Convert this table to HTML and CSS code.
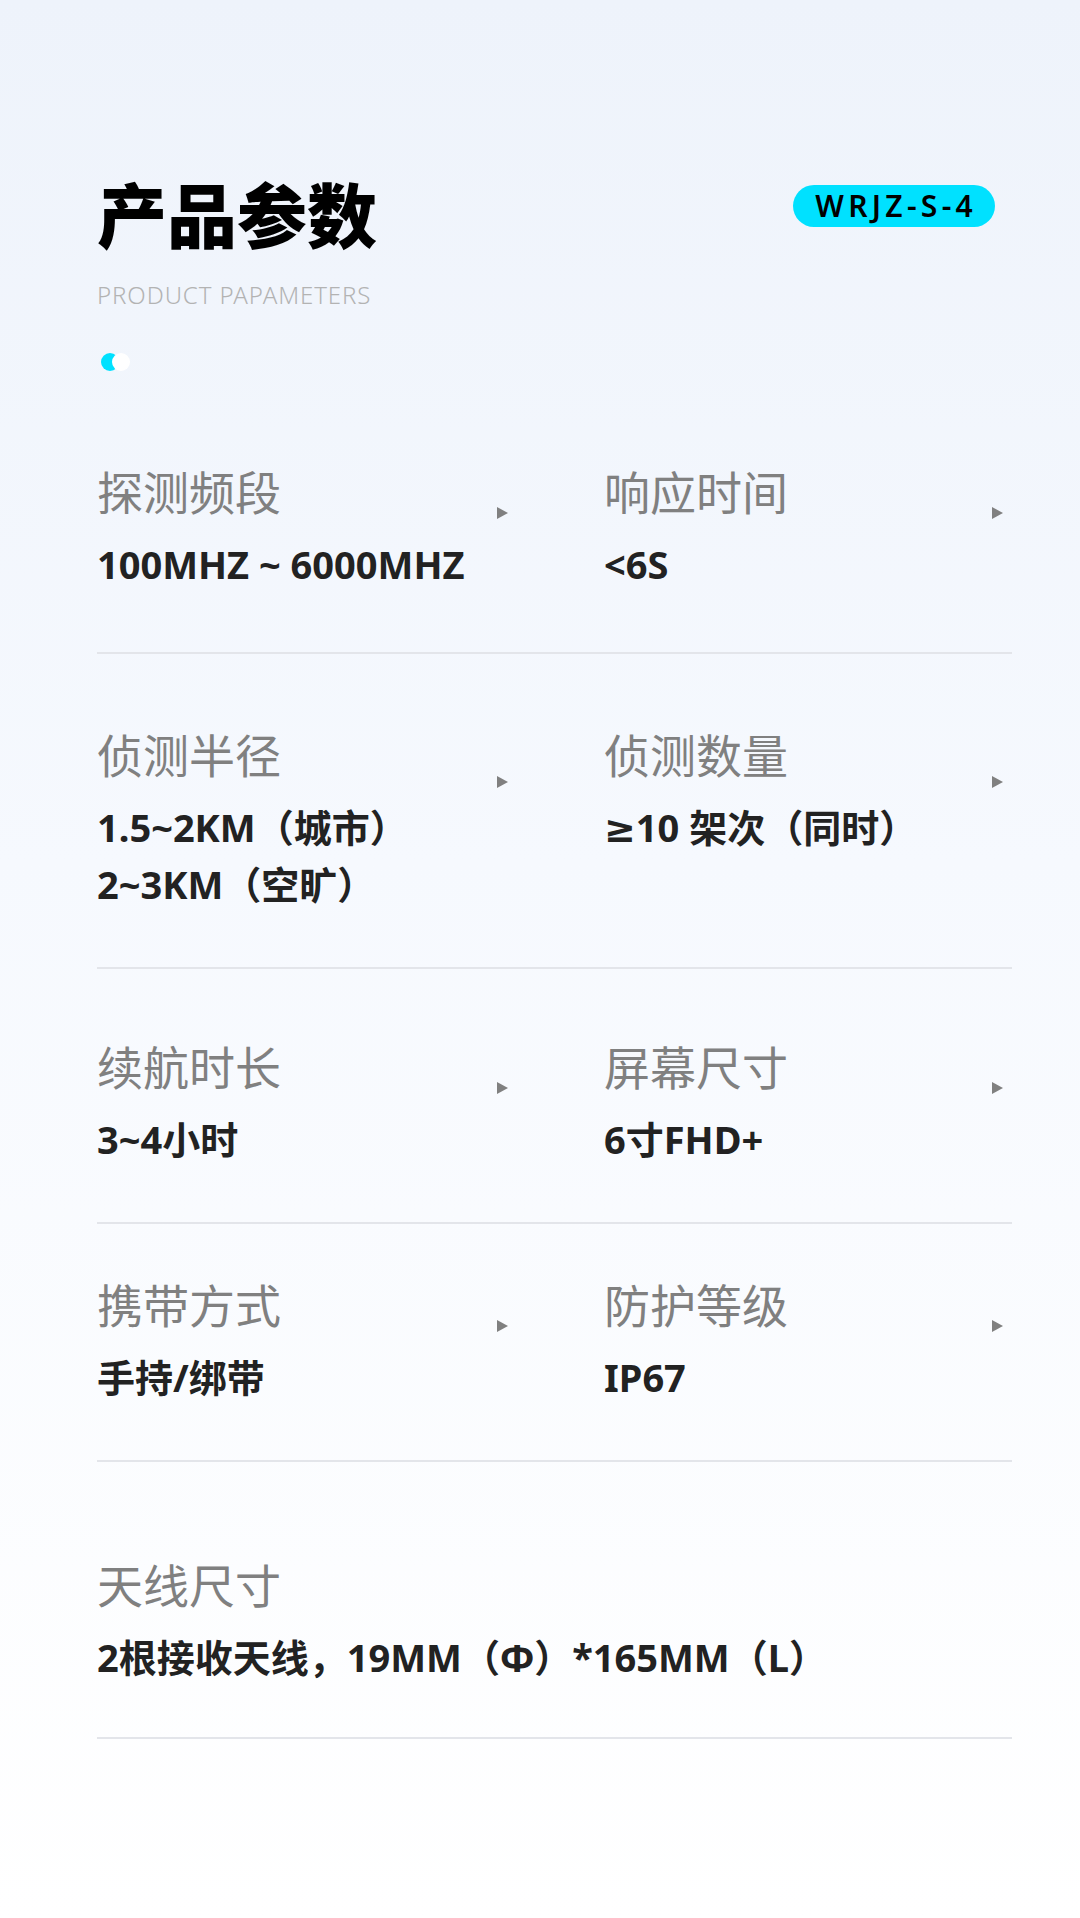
FILE: index.html
```html
<!DOCTYPE html>
<html lang="zh-CN">
  <head>
    <meta charset="UTF-8" />
    <meta name="viewport" content="width=device-width, initial-scale=1.0" />
    <title>产品参数</title>
    <link rel="stylesheet" href="styles.css">
  </head>
  <body>
    <div class="page">
      <header class="head">
        <div class="head-text">
          <h1>产品参数</h1>
          <p class="sub">PRODUCT PAPAMETERS</p>
          <div class="dots">
            <span class="dot dot-cyan"></span>
            <span class="dot dot-white"></span>
          </div>
        </div>
        <div class="badge">WRJZ-S-4</div>
      </header>

      <div class="specs">
        <div class="spec-row first">
          <div class="spec">
            <div class="spec-head">
              <span class="label">探测频段</span>
              <i class="arrow"></i>
            </div>
            <div class="value">100MHZ ~ 6000MHZ</div>
          </div>
          <div class="spec">
            <div class="spec-head">
              <span class="label">响应时间</span>
              <i class="arrow"></i>
            </div>
            <div class="value">&lt;6S</div>
          </div>
        </div>

        <div class="spec-row double">
          <div class="spec">
            <div class="spec-head">
              <span class="label">侦测半径</span>
              <i class="arrow low"></i>
            </div>
            <div class="value">1.5~2KM（城市）<br>2~3KM（空旷）</div>
          </div>
          <div class="spec">
            <div class="spec-head">
              <span class="label">侦测数量</span>
              <i class="arrow low"></i>
            </div>
            <div class="value"><span class="sym">≥</span>10 架次（同时）</div>
          </div>
        </div>

        <div class="spec-row">
          <div class="spec">
            <div class="spec-head">
              <span class="label">续航时长</span>
              <i class="arrow"></i>
            </div>
            <div class="value">3~4小时</div>
          </div>
          <div class="spec">
            <div class="spec-head">
              <span class="label">屏幕尺寸</span>
              <i class="arrow"></i>
            </div>
            <div class="value">6寸FHD+</div>
          </div>
        </div>

        <div class="spec-row tight">
          <div class="spec">
            <div class="spec-head">
              <span class="label">携带方式</span>
              <i class="arrow"></i>
            </div>
            <div class="value">手持/绑带</div>
          </div>
          <div class="spec">
            <div class="spec-head">
              <span class="label">防护等级</span>
              <i class="arrow"></i>
            </div>
            <div class="value">IP67</div>
          </div>
        </div>

        <div class="spec-row single wide">
          <div class="spec">
            <div class="spec-head">
              <span class="label">天线尺寸</span>
            </div>
            <div class="value">2根接收天线，19MM（Φ）*165MM（L）</div>
          </div>
        </div>
      </div>
    </div>
  </body>
</html>
```

FILE: styles.css
```css
body {
  margin: 0;
  font-family: "Noto Sans", "Noto Sans CJK SC", sans-serif;
  color: #222;
  background: linear-gradient(180deg, #eef3fb 0%, #f6f9fe 45%, #ffffff 100%);
  min-height: 1918px;
}
.page {
  padding: 178px 68px 0 97px;
}
.head {
  display: flex;
  justify-content: space-between;
  align-items: flex-start;
}
.head h1 {
  margin: 0;
  font-family: "Noto Sans CJK SC", sans-serif;
  font-size: 70px;
  font-weight: 900;
  line-height: 1;
  color: #000;
}
.sub {
  margin: 35px 0 0;
  font-size: 24px;
  font-weight: 300;
  line-height: 1;
  letter-spacing: 0.9px;
  color: #b3b3b3;
}
.dots {
  display: flex;
  margin: 46px 0 0 4px;
}
.dot {
  width: 18px;
  height: 18px;
  border-radius: 50%;
}
.dot-cyan {
  background-color: #00e1ff;
}
.dot-white {
  background-color: #fff;
  margin-left: -7px;
}
.badge {
  margin: 7px 17px 0 0;
  height: 42px;
  padding: 0 18px 0 22px;
  border-radius: 21px;
  background-color: #00e1ff;
  color: #000;
  font-size: 30px;
  font-weight: 600;
  letter-spacing: 4.3px;
  line-height: 42px;
}
.specs {
  margin-top: 96px;
}
.spec-row {
  display: grid;
  grid-template-columns: 415px 403px;
  column-gap: 92px;
  padding: 73px 0 54px;
  border-bottom: 2px solid #e3e5ea;
}
.spec-row.first {
  padding-top: 0;
  padding-bottom: 59px;
}
.spec-row.double {
  padding-top: 76px;
}
.spec-row.tight {
  padding-top: 56px;
}
.spec-row.wide {
  padding-top: 98px;
  padding-bottom: 51px;
}
.spec-row.single {
  grid-template-columns: 1fr;
}
.spec-head {
  display: flex;
  justify-content: space-between;
  align-items: flex-end;
}
.label {
  font-family: "Noto Sans CJK SC", sans-serif;
  font-size: 46px;
  line-height: 1;
  color: #808080;
}
.arrow {
  width: 0;
  height: 0;
  margin: 0 4px -6px 0;
  border-left: 11px solid #808080;
  border-top: 6px solid transparent;
  border-bottom: 6px solid transparent;
}
.arrow.low {
  margin-bottom: -12px;
}
.value {
  margin-top: 23px;
  font-size: 38px;
  font-weight: 700;
  line-height: 57px;
  color: #222;
}
.sym {
  font-family: "DejaVu Sans", sans-serif;
  font-weight: 700;
}
```
